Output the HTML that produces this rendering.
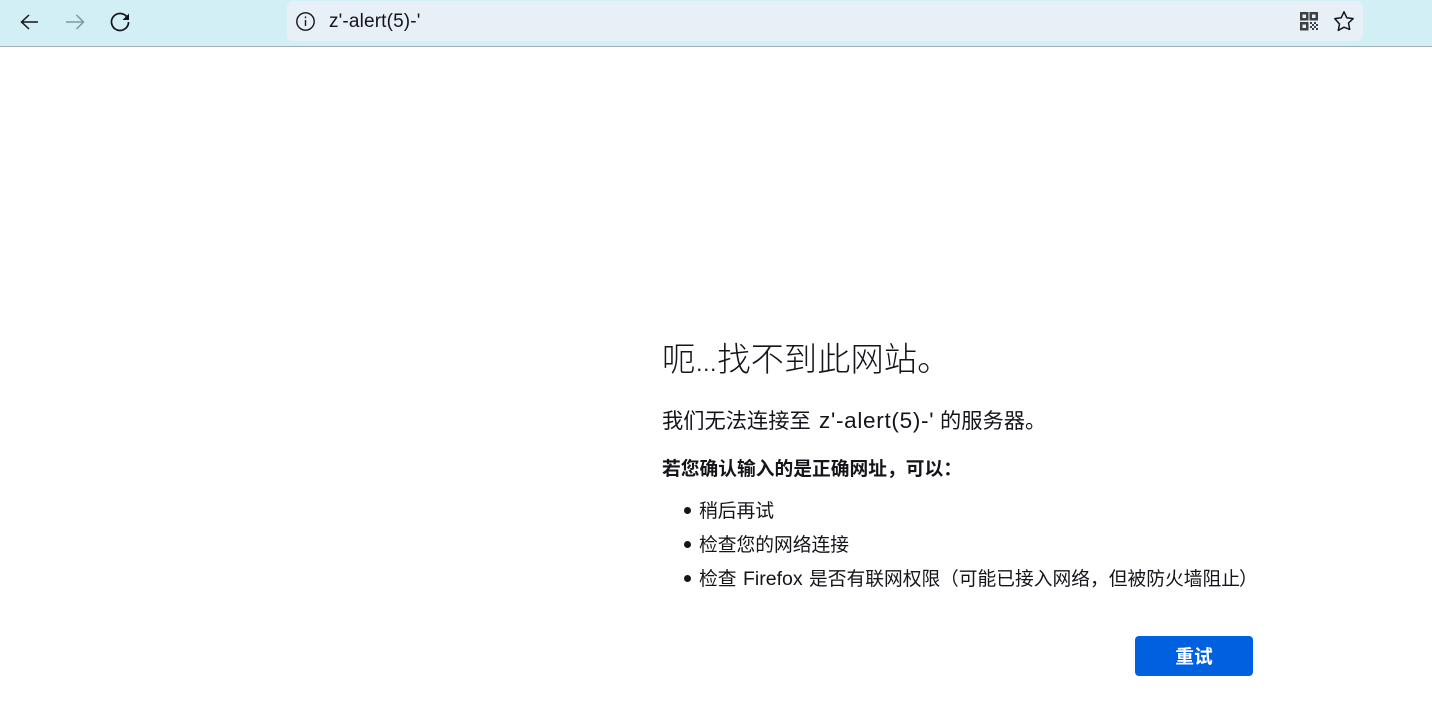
<!DOCTYPE html>
<html lang="zh-CN">
<head>
<meta charset="utf-8">
<title>呃…找不到此网站。</title>
<style>
html,body{margin:0;padding:0;width:1432px;height:722px;overflow:hidden;background:#fff}
body{position:relative;font-family:"Liberation Sans","Noto Sans CJK SC",sans-serif;color:#15141a}
.bar{position:absolute;left:0;top:0;width:1432px;height:46px;background:#d1eff4;border-bottom:1px solid #a3b0b3}
.url{position:absolute;left:287px;top:1px;width:1076px;height:40px;background:#e8f0f7;border-radius:6px}
.urltext{position:absolute;left:329px;top:9px;font-size:19px;letter-spacing:.15px;line-height:25px;color:#15141a;white-space:nowrap}
svg{position:absolute;display:block}
.t{position:absolute;margin:0;white-space:nowrap}
h1.t{left:662px;top:338px;font-size:33.3px;line-height:46px;font-weight:300;color:#15141a}
h1 span{font-size:22px;font-weight:400}
.sub{top:406px;font-size:21.25px;line-height:30px;font-weight:400}
.sub.lat{font-size:22.5px;letter-spacing:.7px}
.bold{left:662px;top:455px;font-size:18.75px;line-height:27px;font-weight:700}
.li{font-size:18.75px;line-height:28px;font-weight:400}
.li.lat{font-size:19.5px}
.dot{position:absolute;left:684px;width:7px;height:7px;border-radius:50%;background:#15141a}
.btn{position:absolute;left:1135px;top:636px;width:118px;height:40px;background:#0061e0;border-radius:4px;color:#fff;font-size:18.75px;font-weight:700;line-height:42px;text-align:center}
</style>
</head>
<body>
<div class="bar"></div>
<div class="url"></div>
<svg style="left:18px;top:10px" width="24" height="24" viewBox="0 0 24 24" fill="none" stroke="#15141a" stroke-width="1.500"><path d="M20 12H4M11 5l-7.500 7 7.500 7"/></svg>
<svg style="left:63px;top:10px" width="24" height="24" viewBox="0 0 24 24" fill="none" stroke="#84979b" stroke-width="1.500"><path d="M3 12h17M13.500 5l7 7-7 7"/></svg>
<svg style="left:108px;top:10px" width="24" height="24" viewBox="0 0 24 24" fill="none"><path d="M19.400 7.800A8.500 8.500 0 1 0 20.500 12" stroke="#15141a" stroke-width="1.700"/><path d="M21 3.500V10h-6.500z" fill="#15141a"/></svg>
<svg style="left:295px;top:11px" width="21" height="21" viewBox="0 0 21 21" fill="none" stroke="#15141a" stroke-width="1.400"><circle cx="10.500" cy="10.500" r="8.700"/><path d="M10.500 9v6"/><path d="M10.500 5.500v1.700"/></svg>
<div class="urltext">z'-alert(5)-'</div>
<svg style="left:1300px;top:12px" width="18" height="19" viewBox="0 0 18 19" fill="#3c4144"><path fill-rule="evenodd" d="M0 0h8.500v8.500H0zM2.500 2.500v3.500h3.500V2.500zM9.500 0h8.500v8.500H9.500zM12 2.500v3.500h3.500V2.500zM0 10h8.500v8.500H0zM2.500 12.500v3.500h3.500v-3.500z"/><path d="M10 10h2v2h-2zM14 10h2v2h-2zM12 12h2v2h-2zM16 12h2v2h-2zM10 14h2v2h-2zM14 14h2v2h-2zM12 16h2v2h-2zM16 16h2v2h-2z"/></svg>
<svg style="left:1333px;top:10px" width="22" height="22" viewBox="0 0 22 22" fill="none" stroke="#15141a" stroke-width="1.500" stroke-linejoin="round"><path d="M11 1.800l2.800 6 6.400.8-4.700 4.400 1.200 6.400L11 17.200l-5.700 3.200 1.200-6.400L1.800 8.600l6.400-.8z"/></svg>
<h1 class="t">呃<span>…</span>找不到此网站。</h1>
<p class="t sub" style="left:662px">我们无法连接至</p>
<p class="t sub lat" style="left:819px">z'-alert(5)-'</p>
<p class="t sub" style="left:940px">的服务器。</p>
<p class="t bold">若您确认输入的是正确网址，可以：</p>
<div class="dot" style="top:507px"></div>
<div class="t li" style="left:699px;top:497px">稍后再试</div>
<div class="dot" style="top:541px"></div>
<div class="t li" style="left:699px;top:531px">检查您的网络连接</div>
<div class="dot" style="top:575px"></div>
<div class="t li" style="left:699px;top:565px">检查</div>
<div class="t li lat" style="left:743px;top:565px">Firefox</div>
<div class="t li" style="left:809px;top:565px">是否有联网权限</div>
<div class="t li" style="left:940px;top:565px">（可能已接入网络，但被防火墙阻止</div>
<div class="t li" style="left:1239px;top:565px">）</div>
<div class="btn">重试</div>
</body>
</html>
